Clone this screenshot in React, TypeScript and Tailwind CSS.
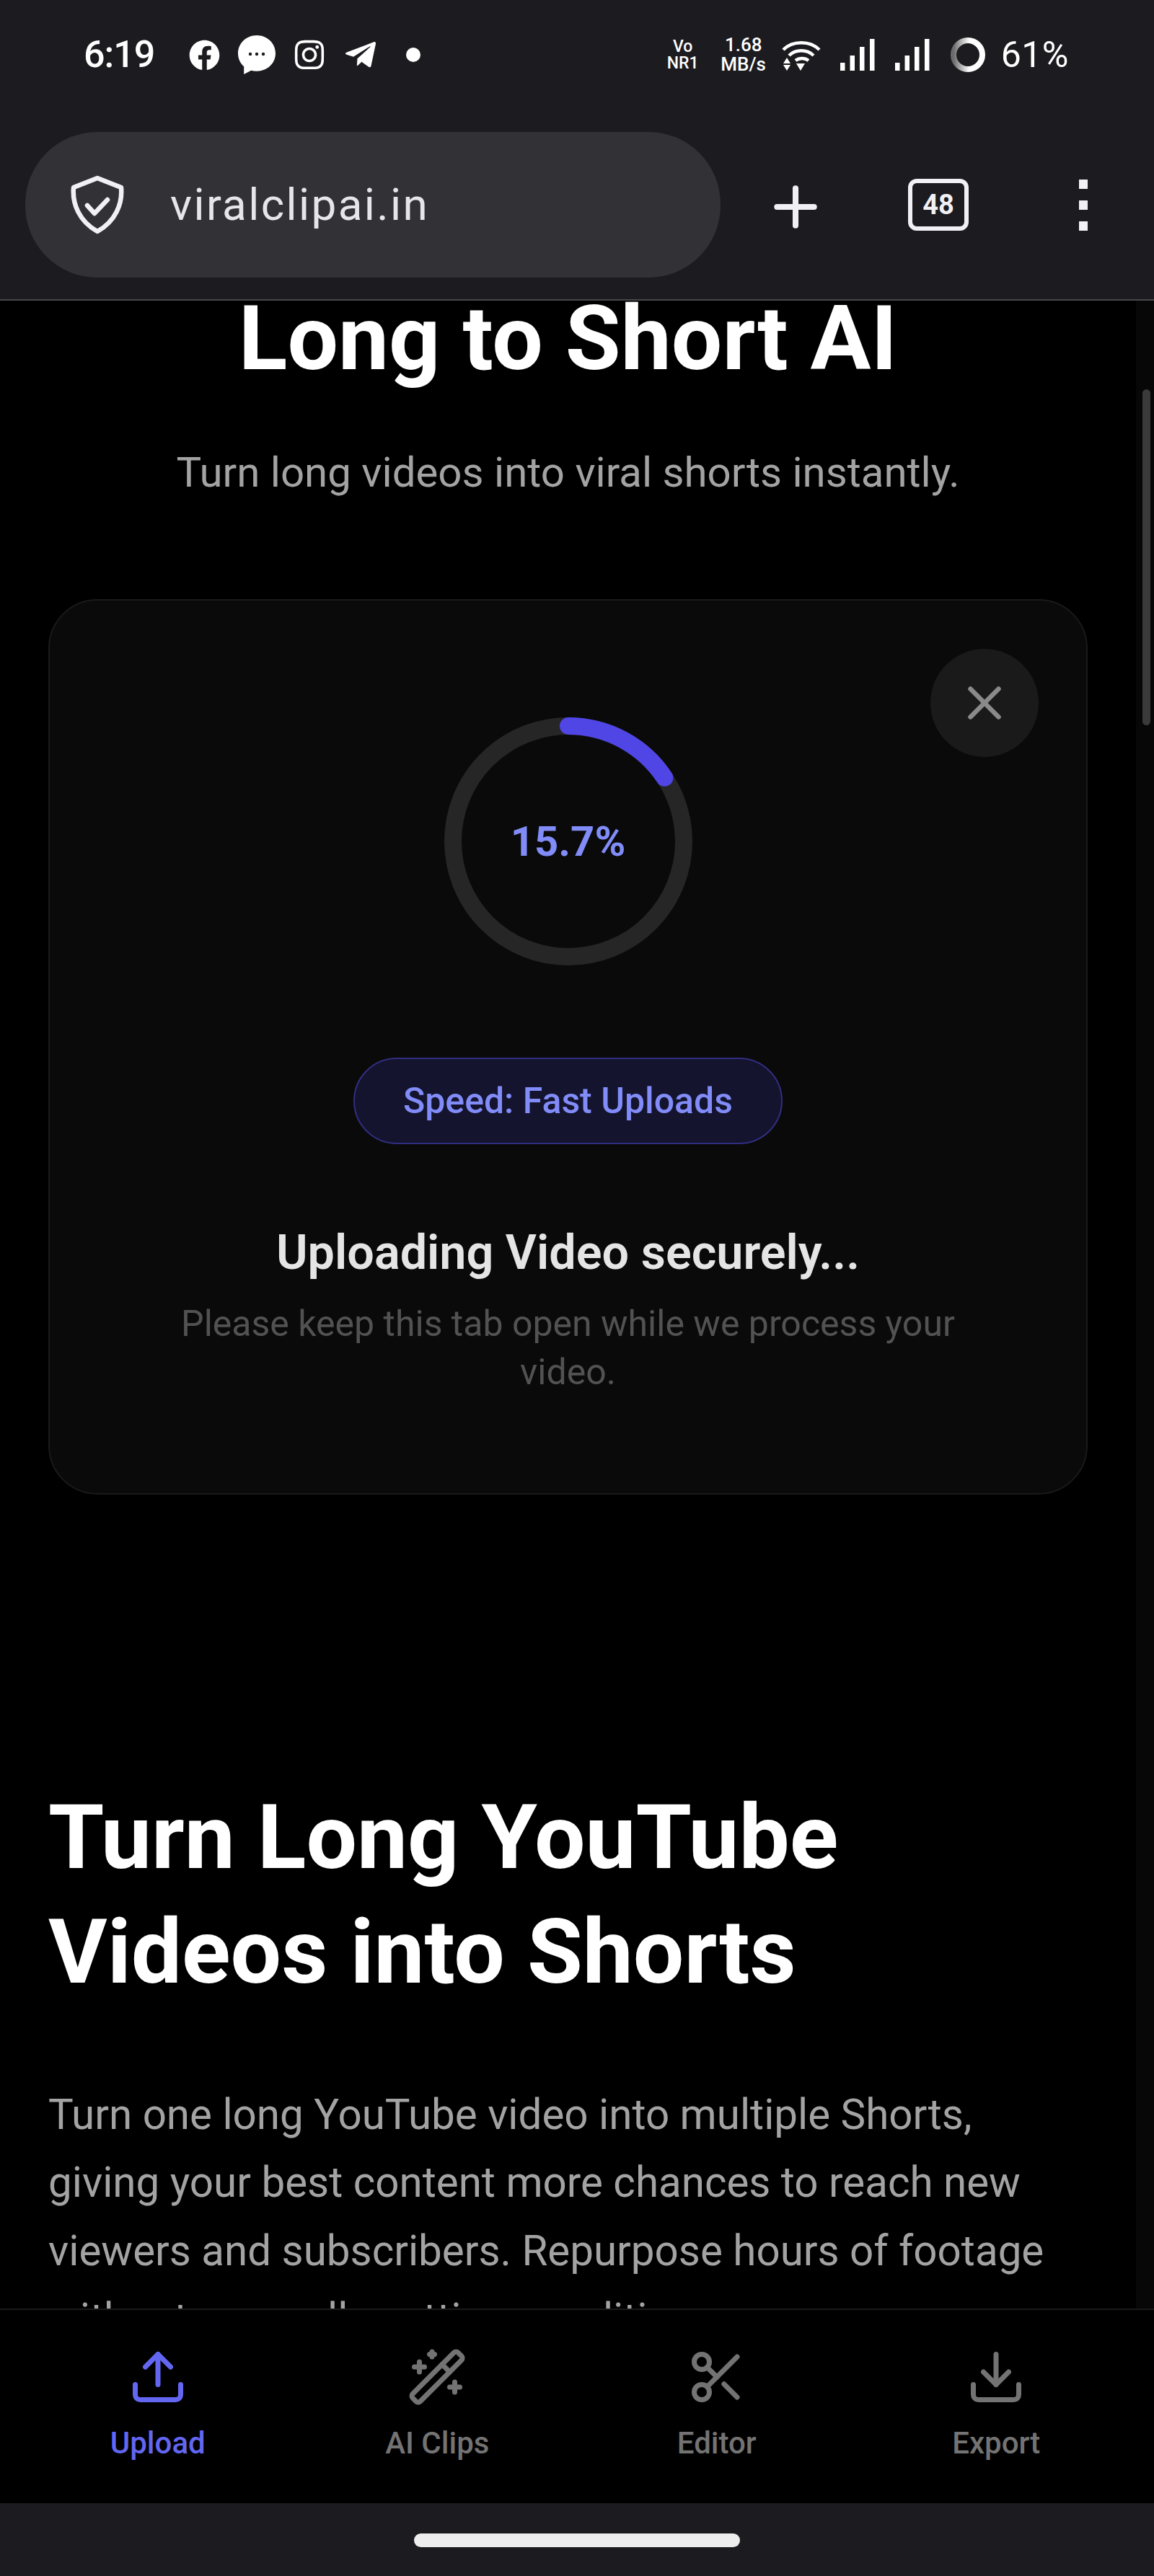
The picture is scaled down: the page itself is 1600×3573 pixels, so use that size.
import React from 'react';
import { Plus, X, Upload, WandSparkles, Scissors, Download } from 'lucide-react';
import { FaFacebook, FaInstagram, FaTelegramPlane } from 'react-icons/fa';

const Messenger = () => (
  <svg width="52" height="54" viewBox="0 0 52 54" className="ml-[25px]">
    <path d="M26 0C11.6 0 0 10.9 0 25c0 7.4 3.1 13.8 8.2 18.2V54l10-5.3c2.4.7 5 1 7.8 1 14.4 0 26-10.700 26-24.700S40.400 0 26 0z" fill="#ffffff" />
    <circle cx="17" cy="26" r="2.200" fill="#1c1b1f" />
    <circle cx="26" cy="26" r="2.200" fill="#1c1b1f" />
    <circle cx="35" cy="26" r="2.200" fill="#1c1b1f" />
  </svg>
);

const Wifi = () => (
  <svg width="54" height="44" viewBox="0 0 54 44" fill="none" stroke="#ffffff" strokeWidth="4.500" className="ml-[19px]">
    <path d="M2 15C15 2 39 2 52 15" />
    <path d="M10 23C19 14 35 14 44 23" />
    <path d="M19 30C24 26 32 26 37 30" />
    <path d="M26 44l-6-10h12z" fill="#ffffff" stroke="none" />
    <path d="M7 26l-5 8h10z" fill="#ffffff" stroke="none" />
    <path d="M7 44l-5-8h10z" fill="#ffffff" stroke="none" />
  </svg>
);

const Signal = ({ className }: { className: string }) => (
  <svg width="48" height="44" viewBox="0 0 48 44" fill="#ffffff" className={className}>
    <rect x="0" y="33" width="6.500" height="11" />
    <rect x="13.500" y="23" width="6.500" height="21" />
    <rect x="27" y="11" width="6.500" height="33" />
    <rect x="41" y="0" width="6.500" height="44" />
  </svg>
);

const BatteryRing = () => (
  <svg width="50" height="52" viewBox="0 0 50 52" fill="none" className="ml-[28px]">
    <defs>
      <linearGradient id="batt" x1="0" y1="0" x2="1" y2="0">
        <stop offset="0" stopColor="#6b6b6b" />
        <stop offset="0.55" stopColor="#ffffff" />
      </linearGradient>
    </defs>
    <circle cx="25" cy="26" r="20" stroke="url(#batt)" strokeWidth="8" />
  </svg>
);

const Shield = () => (
  <svg width="76" height="82" viewBox="0 0 76 82" fill="none" stroke="#f1f0f4" strokeWidth="6.500" strokeLinecap="round" strokeLinejoin="round" className="ml-[62px]">
    <path d="M38 4L71 17C73 40 63 64 38 78C13 64 3 40 5 17z" />
    <path d="M24 42l10 11 18-19" />
  </svg>
);

const StatusBar = () => (
  <div className="h-[150px] flex items-center justify-between pl-[116px] pr-[118px] text-white pt-[2px]">
    <div className="flex items-center">
      <span className="text-[52px] font-medium leading-none w-[98px] tracking-[-1px]">6:19</span>
      <FaFacebook className="ml-[48px] w-[43px] h-[43px]" />
      <Messenger />
      <FaInstagram className="ml-[25px] w-[44px] h-[46px]" />
      <FaTelegramPlane className="ml-[23px] w-[52px] h-[48px]" />
      <div className="ml-[37px] w-[20px] h-[20px] rounded-full bg-white" />
    </div>
    <div className="flex items-center">
      <div className="w-[48px] text-[23px] leading-[23px] font-medium text-center">
        <div>Vo</div>
        <div>NR1</div>
      </div>
      <div className="ml-[26px] w-[68px] text-[26px] leading-[27px] font-medium text-center">
        <div>1.68</div>
        <div>MB/s</div>
      </div>
      <Wifi />
      <Signal className="ml-[27px]" />
      <Signal className="ml-[28px]" />
      <BatteryRing />
      <span className="ml-[21px] text-[50px] leading-none tracking-[0.5px]">61%</span>
    </div>
  </div>
);

const BrowserBar = () => (
  <div className="flex items-center pt-[33px]">
    <div className="ml-[35px] w-[964px] h-[202px] rounded-[100px] bg-[#323136] flex items-center">
      <Shield />
      <span className="ml-[63px] text-[62px] leading-none text-[#e6e5ea] tracking-[2.400px]">viralclipai.in</span>
    </div>
    <Plus className="ml-[60px] mt-[5px] text-[#f1f0f4]" size={88} strokeWidth={2.200} />
    <div className="ml-[112px] w-[84px] h-[72px] border-[6px] border-[#f1f0f4] rounded-[12px] flex items-center justify-center text-[38px] font-bold text-[#f1f0f4]">48</div>
    <div className="ml-[153px] flex flex-col gap-[16px]">
      <div className="w-[12px] h-[13px] bg-[#f1f0f4]" />
      <div className="w-[12px] h-[13px] bg-[#f1f0f4]" />
      <div className="w-[12px] h-[13px] bg-[#f1f0f4]" />
    </div>
  </div>
);

const ProgressRing = () => (
  <div className="relative w-[344px] h-[344px]">
    <svg width="344" height="344" viewBox="0 0 344 344" fill="none" className="-rotate-90">
      <circle cx="172" cy="172" r="160" stroke="#262626" strokeWidth="24" />
      <circle cx="172" cy="172" r="160" stroke="#4f46e5" strokeWidth="24" strokeLinecap="round" strokeDasharray="157.800 1005.300" />
    </svg>
    <div className="absolute inset-0 flex items-center justify-center text-[58px] font-bold text-[#818cf8]">15.7%</div>
  </div>
);

const UploadCard = () => (
  <div className="relative mx-[67px] h-[1242px] rounded-[68px] border-2 border-[#1a1a1a] bg-[#0a0a0a] flex flex-col items-center pt-[162px]">
    <div className="absolute top-[67px] right-[66px] w-[150px] h-[150px] rounded-full bg-[#1a1a1a] flex items-center justify-center">
      <X className="text-[#8a8a8a]" size={78} strokeWidth={2} />
    </div>
    <ProgressRing />
    <div className="mt-[128px] w-[595px] h-[120px] rounded-full border-2 border-[#312e81] bg-[#14142e] flex items-center justify-center text-[50px] font-medium text-[#818cf8]">
      Speed: Fast Uploads
    </div>
    <h2 className="mt-[105px] text-[66.500px] leading-[90px] font-semibold text-[#e5e5e5]">Uploading Video securely...</h2>
    <p className="mt-[21px] w-[1160px] text-center text-[50px] leading-[67px] text-[#525252]">
      Please keep this tab open while we process your video.
    </p>
  </div>
);

const NavItem = ({ icon, label, active }: { icon: React.ReactNode; label: string; active?: boolean }) => (
  <div className={active ? 'flex flex-col items-center text-[#6366f1]' : 'flex flex-col items-center text-[#737373]'}>
    {icon}
    <span className="mt-[25px] text-[42px] leading-[50px] font-medium">{label}</span>
  </div>
);

export default function App() {
  return (
    <div className="relative w-[1600px] h-[3573px] overflow-hidden bg-black flex flex-col font-['Roboto',sans-serif]">
      <header className="shrink-0 h-[417px] bg-[#1c1b1f] border-b-2 border-[#48474b]">
        <StatusBar />
        <BrowserBar />
      </header>

      <main className="relative flex-1 overflow-hidden">
        <div className="w-[1575px]">
          <h1 className="text-center text-[125px] leading-[106px] font-bold text-white">Long to Short AI</h1>
          <p className="mt-[92px] text-center text-[58.200px] leading-[80px] text-[#a3a3a3]">Turn long videos into viral shorts instantly.</p>
          <div className="mt-[136px]">
            <UploadCard />
          </div>
          <div className="px-[67px]">
            <h2 className="mt-[396px] text-[125px] leading-[159px] font-bold text-white">
              Turn Long YouTube
              <br />
              Videos into Shorts
            </h2>
            <p className="mt-[99px] text-[58.300px] leading-[94.400px] text-[#a3a3a3]">
              Turn one long YouTube video into multiple Shorts, giving your best content more chances to reach new viewers and subscribers. Repurpose hours of footage without manually cutting or editing.
            </p>
          </div>
        </div>
        <div className="absolute top-0 bottom-0 right-0 w-[25px] bg-[#070707]" />
        <div className="absolute top-[123px] right-[5px] w-[11px] h-[466px] rounded-full bg-[#3a3a3a]" />
      </main>

      <nav className="shrink-0 h-[270px] bg-black border-t-2 border-[#1a1a1a] grid grid-cols-4 px-[25px] pt-[51px]">
        <NavItem active label="Upload" icon={<Upload size={84} strokeWidth={2} />} />
        <NavItem label="AI Clips" icon={<WandSparkles size={84} strokeWidth={2} />} />
        <NavItem label="Editor" icon={<Scissors size={84} strokeWidth={2} />} />
        <NavItem label="Export" icon={<Download size={84} strokeWidth={2} />} />
      </nav>

      <div className="shrink-0 h-[101px] bg-[#1c1b1f] flex justify-center pt-[42px]">
        <div className="w-[452px] h-[19px] rounded-full bg-[#eeeeee]" />
      </div>
    </div>
  );
}
